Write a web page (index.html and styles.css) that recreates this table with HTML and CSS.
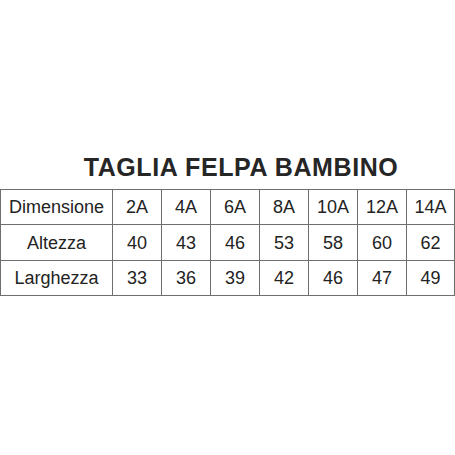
FILE: index.html
```html
<!DOCTYPE html>
<html lang="it">
<head>
<meta charset="utf-8">
<title>Taglia felpa bambino</title>
<link rel="stylesheet" href="styles.css">
</head>
<body>
<div class="page">
  <h1 class="title">TAGLIA FELPA BAMBINO</h1>
  <div class="chart">
    <div class="cell head">Dimensione</div>
    <div class="cell">2A</div>
    <div class="cell">4A</div>
    <div class="cell">6A</div>
    <div class="cell">8A</div>
    <div class="cell">10A</div>
    <div class="cell">12A</div>
    <div class="cell">14A</div>

    <div class="cell head">Altezza</div>
    <div class="cell">40</div>
    <div class="cell">43</div>
    <div class="cell">46</div>
    <div class="cell">53</div>
    <div class="cell">58</div>
    <div class="cell">60</div>
    <div class="cell">62</div>

    <div class="cell head">Larghezza</div>
    <div class="cell">33</div>
    <div class="cell">36</div>
    <div class="cell">39</div>
    <div class="cell">42</div>
    <div class="cell">46</div>
    <div class="cell">47</div>
    <div class="cell">49</div>
  </div>
</div>
</body>
</html>
```

FILE: styles.css
```css
html, body {
  margin: 0;
  padding: 0;
  background: #ffffff;
}

.page {
  width: 455px;
  height: 455px;
  padding-top: 153px;
  box-sizing: border-box;
  font-family: "Liberation Sans", Arial, sans-serif;
  color: #232323;
}

.title {
  margin: 0 0 8px 0;
  padding-left: 27px;
  height: 28px;
  line-height: 28px;
  font-size: 25px;
  letter-spacing: 0.6px;
  font-weight: bold;
  text-align: center;
  color: #262626;
  white-space: nowrap;
}

.chart {
  display: grid;
  grid-template-columns: 111px repeat(6, 48px) 47px;
  grid-template-rows: 34px 35px 34px;
  gap: 1px;
  width: 455px;
  box-sizing: border-box;
  border: 1px solid #6e6e6e;
  background: #6e6e6e;
}

.cell {
  background: #ffffff;
  display: flex;
  align-items: center;
  justify-content: center;
  font-size: 18px;
  line-height: 20px;
}
```
